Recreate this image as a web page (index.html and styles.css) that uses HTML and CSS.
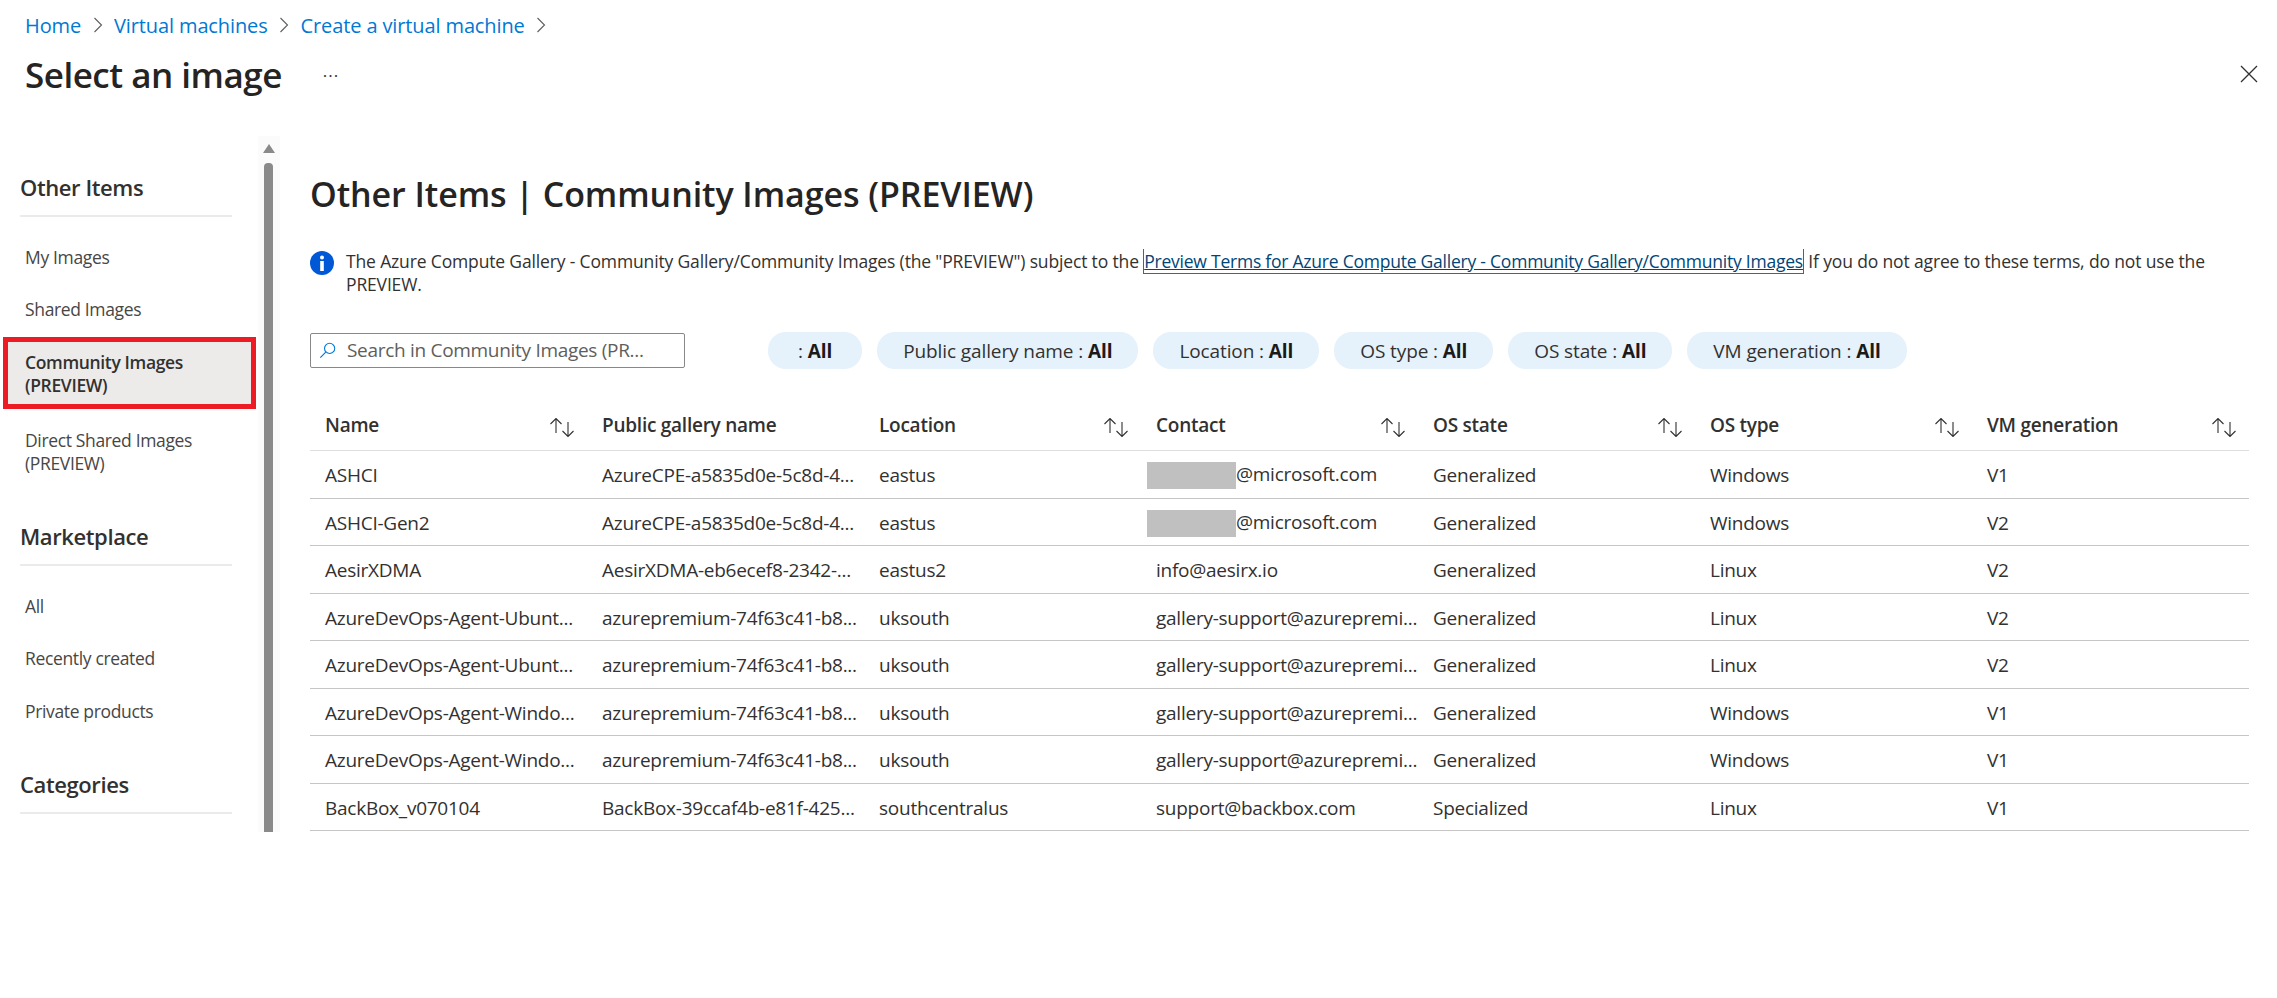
FILE: index.html
```html
<!DOCTYPE html>
<html lang="en">

<head>
    <meta charset="UTF-8">
    <title>Select an image</title>
    <link rel="stylesheet" href="styles.css">
</head>

<body>
    <!-- top of the blade -->
    <header class="blade-header">
        <nav class="breadcrumb">
            <a href="#">Home</a>
            <svg class="chevron" viewBox="0 0 10 16"><path d="M1.5 1 L8.5 8 L1.5 15" /></svg>
            <a href="#">Virtual machines</a>
            <svg class="chevron" viewBox="0 0 10 16"><path d="M1.5 1 L8.5 8 L1.5 15" /></svg>
            <a href="#">Create a virtual machine</a>
            <svg class="chevron" viewBox="0 0 10 16"><path d="M1.5 1 L8.5 8 L1.5 15" /></svg>
        </nav>
        <div class="title-row">
            <h1 class="blade-title">Select an image</h1>
            <span class="more-dots">...</span>
            <svg class="close-icon" viewBox="0 0 18 18"><path d="M1 1 L17 17 M17 1 L1 17" /></svg>
        </div>
    </header>

    <div class="blade-body">
        <!-- left menu -->
        <aside class="side-menu">
            <div class="menu-scroll">
                <h2 class="menu-group">Other Items</h2>
                <ul class="menu-list">
                    <li>My Images</li>
                    <li>Shared Images</li>
                    <li class="selected">Community Images (PREVIEW)</li>
                    <li class="two-lines">Direct Shared Images (PREVIEW)</li>
                </ul>
                <h2 class="menu-group">Marketplace</h2>
                <ul class="menu-list short">
                    <li>All</li>
                    <li>Recently created</li>
                    <li>Private products</li>
                </ul>
                <h2 class="menu-group">Categories</h2>
            </div>
            <div class="scrollbar">
                <span class="scroll-up"></span>
                <span class="scroll-thumb"></span>
            </div>
        </aside>

        <!-- main content -->
        <main class="content">
            <h2 class="page-title">Other Items | Community Images (PREVIEW)</h2>
            <div class="notice">
                <svg class="info-icon" viewBox="0 0 24 24">
                    <circle cx="12" cy="12" r="12" fill="#0058d6" />
                    <circle cx="12" cy="6.6" r="2" fill="#fff" />
                    <rect x="10.2" y="10" width="3.6" height="10" fill="#fff" />
                </svg>
                <p>The Azure Compute Gallery - Community Gallery/Community Images (the "PREVIEW") subject to the <a href="#">Preview Terms for Azure Compute Gallery - Community Gallery/Community Images</a> If you do not agree to these terms, do not use the PREVIEW.</p>
            </div>

            <div class="filters">
                <div class="search-box">
                    <svg class="search-icon" viewBox="0 0 20 20"><circle cx="12.5" cy="7.5" r="6" /><path d="M8 12 L1.5 18.5" /></svg>
                    <span>Search in Community Images (PR...</span>
                </div>
                <div class="pills">
                    <span class="pill no-label">: <b>All</b></span>
                    <span class="pill">Public gallery name : <b>All</b></span>
                    <span class="pill">Location : <b>All</b></span>
                    <span class="pill">OS type : <b>All</b></span>
                    <span class="pill">OS state : <b>All</b></span>
                    <span class="pill">VM generation : <b>All</b></span>
                </div>
            </div>

            <table class="images">
                <thead>
                    <tr>
                        <th>Name<svg class="sort" viewBox="0 0 24 19"><path d="M6 15 V0.5 M0.5 6 L6 0.5 L11.5 6 M18 4 V18.5 M12.5 13 L18 18.5 L23.5 13" /></svg></th>
                        <th>Public gallery name</th>
                        <th>Location<svg class="sort" viewBox="0 0 24 19"><path d="M6 15 V0.5 M0.5 6 L6 0.5 L11.5 6 M18 4 V18.5 M12.5 13 L18 18.5 L23.5 13" /></svg></th>
                        <th>Contact<svg class="sort" viewBox="0 0 24 19"><path d="M6 15 V0.5 M0.5 6 L6 0.5 L11.5 6 M18 4 V18.5 M12.5 13 L18 18.5 L23.5 13" /></svg></th>
                        <th>OS state<svg class="sort" viewBox="0 0 24 19"><path d="M6 15 V0.5 M0.5 6 L6 0.5 L11.5 6 M18 4 V18.5 M12.5 13 L18 18.5 L23.5 13" /></svg></th>
                        <th>OS type<svg class="sort" viewBox="0 0 24 19"><path d="M6 15 V0.5 M0.5 6 L6 0.5 L11.5 6 M18 4 V18.5 M12.5 13 L18 18.5 L23.5 13" /></svg></th>
                        <th>VM generation<svg class="sort" viewBox="0 0 24 19"><path d="M6 15 V0.5 M0.5 6 L6 0.5 L11.5 6 M18 4 V18.5 M12.5 13 L18 18.5 L23.5 13" /></svg></th>
                    </tr>
                </thead>
                <tbody>
                    <tr>
                        <td>ASHCI</td><td>AzureCPE-a5835d0e-5c8d-4...</td><td>eastus</td>
                        <td><span class="redacted"></span>@microsoft.com</td>
                        <td>Generalized</td><td>Windows</td><td>V1</td>
                    </tr>
                    <tr>
                        <td>ASHCI-Gen2</td><td>AzureCPE-a5835d0e-5c8d-4...</td><td>eastus</td>
                        <td><span class="redacted"></span>@microsoft.com</td>
                        <td>Generalized</td><td>Windows</td><td>V2</td>
                    </tr>
                    <tr>
                        <td>AesirXDMA</td><td>AesirXDMA-eb6ecef8-2342-...</td><td>eastus2</td>
                        <td>info@aesirx.io</td>
                        <td>Generalized</td><td>Linux</td><td>V2</td>
                    </tr>
                    <tr>
                        <td>AzureDevOps-Agent-Ubunt...</td><td>azurepremium-74f63c41-b8...</td><td>uksouth</td>
                        <td>gallery-support@azurepremi...</td>
                        <td>Generalized</td><td>Linux</td><td>V2</td>
                    </tr>
                    <tr>
                        <td>AzureDevOps-Agent-Ubunt...</td><td>azurepremium-74f63c41-b8...</td><td>uksouth</td>
                        <td>gallery-support@azurepremi...</td>
                        <td>Generalized</td><td>Linux</td><td>V2</td>
                    </tr>
                    <tr>
                        <td>AzureDevOps-Agent-Windo...</td><td>azurepremium-74f63c41-b8...</td><td>uksouth</td>
                        <td>gallery-support@azurepremi...</td>
                        <td>Generalized</td><td>Windows</td><td>V1</td>
                    </tr>
                    <tr>
                        <td>AzureDevOps-Agent-Windo...</td><td>azurepremium-74f63c41-b8...</td><td>uksouth</td>
                        <td>gallery-support@azurepremi...</td>
                        <td>Generalized</td><td>Windows</td><td>V1</td>
                    </tr>
                    <tr>
                        <td>BackBox_v070104</td><td>BackBox-39ccaf4b-e81f-425...</td><td>southcentralus</td>
                        <td>support@backbox.com</td>
                        <td>Specialized</td><td>Linux</td><td>V1</td>
                    </tr>
                </tbody>
            </table>
        </main>
    </div>
</body>

</html>
```

FILE: styles.css
```css
body {
    margin: 0;
    height: 998px;
    overflow: hidden;
    background-color: #fff;
    color: #323130;
    font-family: "Open Sans", "Noto Sans", sans-serif;
    font-size: 17.5px;
    letter-spacing: -0.15px;
}

a {
    text-decoration: none;
}

h1, h2, p, ul {
    margin: 0;
    padding: 0;
}

/* top of the blade */
.blade-header {
    padding: 13px 19px 0 25px;
    height: 122px;
    box-sizing: border-box;
}

.breadcrumb {
    display: flex;
    align-items: center;
    gap: 11.5px;
    height: 24px;
    font-size: 20px;
    letter-spacing: -0.12px;
}

.breadcrumb a {
    color: #0078d4;
}

.chevron {
    width: 10px;
    height: 16px;
    fill: none;
    stroke: #605e5c;
    stroke-width: 1.1;
}

.title-row {
    display: flex;
    align-items: center;
    margin-top: 12px;
    height: 50px;
}

.blade-title {
    font-size: 35px;
    font-weight: 600;
    letter-spacing: -0.5px;
    color: #252423;
}

.more-dots {
    margin-left: 41px;
    margin-top: -8px;
    font-size: 17px;
    letter-spacing: 1px;
}

.close-icon {
    width: 18px;
    height: 18px;
    margin-left: auto;
    fill: none;
    stroke: #323130;
    stroke-width: 1.3;
}

/* body below the header */
.blade-body {
    display: flex;
}

.side-menu {
    width: 280px;
    height: 710px;
    display: flex;
    flex-shrink: 0;
    overflow: hidden;
}

.menu-scroll {
    width: 258px;
    padding-top: 45px;
    box-sizing: border-box;
}

.menu-group {
    margin: 0 26px 0 20px;
    height: 50px;
    box-sizing: border-box;
    font-size: 22px;
    font-weight: 600;
    letter-spacing: -0.4px;
    line-height: 40px;
    border-bottom: 2px solid #edebe9;
}

.menu-list {
    list-style: none;
    padding: 14px 0 29px;
    letter-spacing: -0.35px;
}

.menu-list.short {
    padding-bottom: 26px;
}

.menu-list li {
    height: 52.5px;
    padding: 0 50px 0 25px;
    box-sizing: border-box;
    display: flex;
    align-items: center;
    line-height: 23.5px;
    color: #484644;
}

.menu-list li.two-lines {
    height: 70px;
}

.menu-list li.selected {
    height: 72px;
    margin: 1px 2px 8px 3px;
    padding: 2px 30px 0 17px;
    font-weight: 600;
    background-color: #edebe9;
    border: 5px solid #ed1c24;
    color: #323130;
}

.scrollbar {
    width: 22px;
    background-color: #fbfbfb;
    padding-top: 8px;
    box-sizing: border-box;
    height: 696px;
    margin-top: 14px;
}

.scroll-up {
    display: block;
    width: 0;
    margin-left: 5px;
    border-left: 6.5px solid transparent;
    border-right: 6.5px solid transparent;
    border-bottom: 9px solid #8a8a8a;
}

.scroll-thumb {
    display: block;
    margin: 10px 0 0 6px;
    width: 9px;
    height: 669px;
    background-color: #8a8a8a;
    border-radius: 4px 4px 0 0;
}

/* main content */
.content {
    width: 1939px;
    margin-left: 30px;
    padding-top: 49px;
}

.page-title {
    font-size: 34px;
    font-weight: 600;
    letter-spacing: -0.07px;
    line-height: 46px;
    color: #252423;
}

.notice {
    display: flex;
    margin-top: 34px;
}

.info-icon {
    width: 24px;
    height: 24px;
    margin-right: 12px;
    flex-shrink: 0;
}

.notice p {
    line-height: 23px;
    margin-top: -1px;
    padding-right: 30px;
}

.notice a {
    color: #004578;
    letter-spacing: -0.23px;
    text-decoration: underline;
    border: 1px solid #605e5c;
    border-top: none;
}

.filters {
    display: flex;
    align-items: center;
    margin-top: 36px;
}

.search-box {
    width: 375px;
    height: 35px;
    box-sizing: border-box;
    border: 1px solid #8a8886;
    border-radius: 2px;
    display: flex;
    align-items: center;
    padding-left: 8px;
    padding-bottom: 1px;
    font-size: 19px;
    letter-spacing: -0.3px;
    color: #605e5c;
}

.search-icon {
    width: 17px;
    height: 17px;
    margin-right: 11px;
    fill: none;
    stroke: #0078d4;
    stroke-width: 1.3;
}

.pills {
    display: flex;
    gap: 15px;
    margin-left: 83px;
}

.pill {
    height: 37px;
    padding: 0 26px;
    display: flex;
    align-items: center;
    white-space: pre;
    font-size: 19px;
    letter-spacing: -0.1px;
    background-color: #e5f1fb;
    border-radius: 18px;
}

.pill.no-label {
    padding: 0 30px;
}

.pill b {
    font-weight: 700;
    color: #1b1a19;
}

.images {
    width: 1939px;
    margin-top: 36px;
    border-collapse: collapse;
    table-layout: fixed;
    font-size: 19px;
    letter-spacing: -0.25px;
}

.images th {
    height: 40px;
    padding: 0 15px 5px;
    text-align: left;
    font-weight: 600;
    border-bottom: 1px solid #e1dfdd;
    position: relative;
}

.sort {
    position: absolute;
    right: 13px;
    top: 13px;
    width: 24px;
    height: 19px;
    fill: none;
    stroke: #323130;
    stroke-width: 1.1;
}

.images td {
    height: 44.5px;
    padding: 2px 15px 0;
    border-bottom: 1px solid #c8c6c4;
    white-space: nowrap;
    overflow: hidden;
}

.redacted {
    display: inline-block;
    width: 89px;
    height: 27px;
    margin-left: -9px;
    vertical-align: -8px;
    background-color: #c0c0c0;
}
```
